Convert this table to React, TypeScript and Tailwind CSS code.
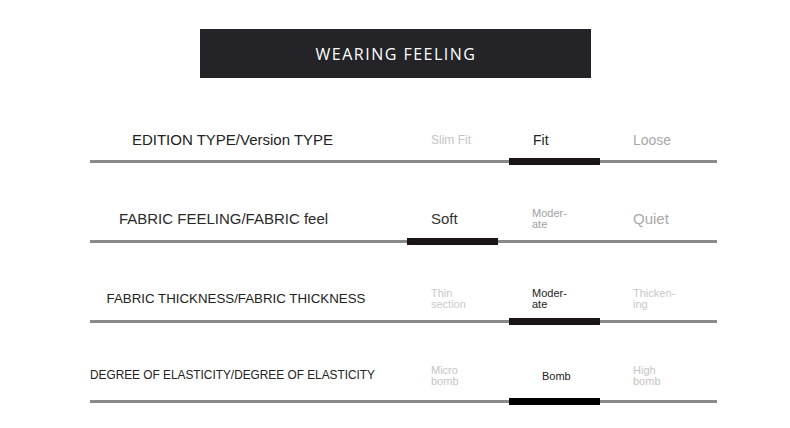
import React from "react";

type Opt = { lines: string[]; cls: string };
type Row = {
  title: string;
  titleCls: string;
  titlePad: string;
  barOffset: string;
  barColor: string;
  areaCls: string;
  opts: Opt[];
};

const rows: Row[] = [
  {
    title: "EDITION TYPE/Version TYPE",
    titleCls: "text-[15px] text-[#222]",
    titlePad: "pl-[3px]",
    barOffset: "w-[419px]",
    barColor: "bg-[#1b1415]",
    areaCls: "",
    opts: [
      { lines: ["Slim Fit"], cls: "text-[12px] text-[#c4c4c4]" },
      { lines: ["Fit"], cls: "text-[14px] text-[#222] pl-[1px]" },
      { lines: ["Loose"], cls: "text-[14px] text-[#a8a8a8]" },
    ],
  },
  {
    title: "FABRIC FEELING/FABRIC feel",
    titleCls: "text-[15px] text-[#2a2a2a]",
    titlePad: "pr-[15px]",
    barOffset: "w-[317px]",
    barColor: "bg-[#1b1415]",
    areaCls: "pb-[2px]",
    opts: [
      { lines: ["Soft"], cls: "text-[15px] text-[#333]" },
      { lines: ["Moder-", "ate"], cls: "text-[11px] leading-[11px] text-[#a0a0a0]" },
      { lines: ["Quiet"], cls: "text-[15px] text-[#a8a8a8]" },
    ],
  },
  {
    title: "FABRIC THICKNESS/FABRIC THICKNESS",
    titleCls: "text-[13.3px] text-[#222]",
    titlePad: "pl-[10px]",
    barOffset: "w-[419px]",
    barColor: "bg-[#1b1415]",
    areaCls: "pb-[2px]",
    opts: [
      { lines: ["Thin", "section"], cls: "text-[11px] leading-[11px] text-[#c8c8c8]" },
      { lines: ["Moder-", "ate"], cls: "text-[11px] leading-[11px] text-[#222]" },
      { lines: ["Thicken-", "ing"], cls: "text-[11px] leading-[11px] text-[#c8c8c8]" },
    ],
  },
  {
    title: "DEGREE OF ELASTICITY/DEGREE OF ELASTICITY",
    titleCls: "text-[11.85px] text-[#222]",
    titlePad: "pr-[6px]",
    barOffset: "w-[419px]",
    barColor: "bg-black",
    areaCls: "pb-[8px]",
    opts: [
      { lines: ["Micro", "bomb"], cls: "text-[11px] leading-[11px] text-[#c4c4c4]" },
      { lines: ["Bomb"], cls: "text-[11px] text-[#222] pl-[10px]" },
      { lines: ["High", "bomb"], cls: "text-[11px] leading-[11px] text-[#c4c4c4]" },
    ],
  },
];

export default function App() {
  return (
    <div
      className="w-[790px] h-[428px] bg-white overflow-hidden pt-[29px]"
      style={{ fontFamily: '"Liberation Sans", Arial, sans-serif' }}
    >
      <div className="mx-auto w-[391px] h-[49px] bg-[#242428] flex items-center justify-center">
        <span
          className="text-white text-[16px] tracking-[1.5px] pl-[2px]"
          style={{ fontFamily: '"Open Sans", "Noto Sans", sans-serif' }}
        >
          WEARING FEELING
        </span>
      </div>
      <div className="mt-[7px] ml-[90px] w-[627px] flex flex-col">
        {rows.map((r, i) => (
          <div key={i} className="h-[80px] flex flex-col justify-end">
            <div className={`h-[36px] flex items-center ${r.areaCls}`}>
              <div className={`w-[282px] shrink-0 text-center whitespace-nowrap ${r.titlePad} ${r.titleCls}`}>
                {r.title}
              </div>
              <div className="w-[59px] shrink-0" />
              {r.opts.map((o, j) => (
                <div key={j} className={`w-[101px] shrink-0 whitespace-nowrap ${o.cls}`}>
                  {o.lines.map((l, k) => (
                    <div key={k}>{l}</div>
                  ))}
                </div>
              ))}
            </div>
            <div className="h-[7px] flex items-center">
              <div className={`${r.barOffset} h-[3px] bg-[#8a8a8a]`} />
              <div className={`w-[91px] h-[7px] ${r.barColor}`} />
              <div className="flex-1 h-[3px] bg-[#8a8a8a]" />
            </div>
          </div>
        ))}
      </div>
    </div>
  );
}
